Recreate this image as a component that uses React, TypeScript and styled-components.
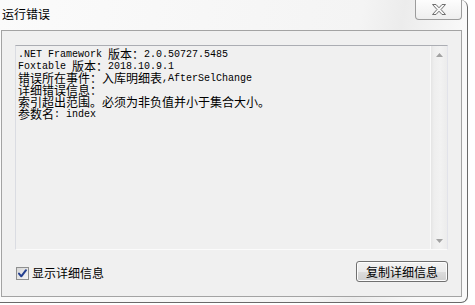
import React from "react";
import styled, { createGlobalStyle } from "styled-components";

const GlobalStyle = createGlobalStyle`
	* {
		box-sizing: border-box;
	}
	body {
		margin: 0;
		background: #ffffff;
		overflow: hidden;
	}
`;

const detailLines = [
	".NET Framework 版本：2.0.50727.5485",
	"Foxtable 版本：2018.10.9.1",
	"错误所在事件：入库明细表,AfterSelChange",
	"详细错误信息：",
	"索引超出范围。必须为非负值并小于集合大小。",
	"参数名: index",
];

const hanRe = /([\u3000-\u9fff\uff00-\uffef]+)/;

const splitRuns = (text: string) =>
	text
		.split(hanRe)
		.filter(Boolean)
		.map((part) => ({ text: part, han: hanRe.test(part) }));

const App = () => {
	return (
		<>
			<GlobalStyle />
			<Window>
				<TitleBar>
					<Title>运行错误</Title>
					<CloseButton aria-label="close">
						<svg width="14" height="11" viewBox="0 0 14 11">
							<polygon
								points="0.5,0.5 4,0.5 7,3.8 10,0.5 13.5,0.5 9,5.5 13.5,10.5 10,10.5 7,7.2 4,10.5 0.5,10.5 5,5.5"
								fill="#f7f7f7"
								stroke="#6f6f6f"
								strokeWidth="1"
								strokeLinejoin="round"
							/>
						</svg>
					</CloseButton>
				</TitleBar>
				<Client>
					<DetailBox>
						<DetailText>
							{detailLines.map((line, i) => (
								<Line key={`line-${i}`}>
									{splitRuns(line).map((run, j) =>
										run.han ? (
											<Han key={j}>{run.text}</Han>
										) : (
											<Mono key={j}>{run.text}</Mono>
										)
									)}
								</Line>
							))}
						</DetailText>
						<ScrollBar>
							<ArrowBox>
								<svg width="7" height="4" viewBox="0 0 7 4">
									<polygon points="3.5,0 7,4 0,4" fill="#a2a2a2" />
								</svg>
							</ArrowBox>
							<ArrowBox>
								<svg width="7" height="4" viewBox="0 0 7 4">
									<polygon points="0,0 7,0 3.5,4" fill="#a2a2a2" />
								</svg>
							</ArrowBox>
						</ScrollBar>
					</DetailBox>
					<Footer>
						<CheckLabel>
							<CheckBox>
								<svg width="11" height="11" viewBox="0 0 11 11">
									<path
										d="M2 5.6 L4.3 8.3 L9 2.2"
										fill="none"
										stroke="#233f8f"
										strokeWidth="2"
										strokeLinecap="round"
										strokeLinejoin="round"
									/>
								</svg>
							</CheckBox>
							<span>显示详细信息</span>
						</CheckLabel>
						<PushButton>复制详细信息</PushButton>
					</Footer>
				</Client>
			</Window>
		</>
	);
};

export default App;

const Window = styled.div`
	display: flex;
	flex-direction: column;
	width: 468px;
	height: 303px;
	border-right: 1px solid #6a6a6a;
	border-bottom: 1px solid #6a6a6a;
	border-radius: 0 7px 7px 0;
	background: linear-gradient(100deg, #fbfbfb 0%, #f4f4f4 70%, #ececec 78%, #f9f9f9 90%);
`;

const TitleBar = styled.div`
	display: flex;
	align-items: flex-start;
	justify-content: space-between;
	height: 30px;
`;

const Title = styled.div`
	padding: 6px 0 0 2px;
	font-family: "Noto Sans CJK SC", sans-serif;
	font-size: 12px;
	line-height: 16px;
	color: #000;
`;

const CloseButton = styled.div`
	display: flex;
	align-items: center;
	justify-content: center;
	width: 47px;
	height: 20px;
	margin-right: 5px;
	border: 1px solid #9c9c9c;
	border-top: none;
	border-radius: 0 0 4px 4px;
	background: linear-gradient(#fdfdfd, #eeeeee);
`;

const Client = styled.div`
	display: flex;
	flex-direction: column;
	gap: 11px;
	width: 461px;
	height: 267px;
	margin-left: 1px;
	padding: 14px 13px;
	border: 1px solid #a3a3a3;
	background: #f0f0f0;
`;

const DetailBox = styled.div`
	display: flex;
	height: 205px;
	border: 1px solid;
	border-color: #abadb3 #e2e3ea #fbfbfb #dadce2;
	background: #f0f0f0;
`;

const DetailText = styled.div`
	flex: 1;
	padding: 2px 2px;
`;

const Line = styled.div`
	display: flex;
	align-items: center;
	height: 12px;
	line-height: 12px;
	white-space: pre;
	color: #000;
`;

const Mono = styled.span`
	display: block;
	height: 12px;
	padding-top: 1px;
	font-family: "Liberation Mono", monospace;
	font-size: 10px;
	line-height: 12px;
`;

const Han = styled.span`
	display: block;
	height: 12px;
	font-family: "Noto Sans CJK SC", sans-serif;
	font-size: 12px;
	line-height: 12px;
	overflow: visible;
`;

const ScrollBar = styled.div`
	display: flex;
	flex-direction: column;
	justify-content: space-between;
	width: 17px;
	border-left: 1px solid #fafafa;
	background: linear-gradient(to right, #e4e4e4 0, #eeeeee 3px, #f2f2f2 60%, #ececec 100%);
`;

const ArrowBox = styled.div`
	display: flex;
	align-items: center;
	justify-content: center;
	height: 17px;
`;

const Footer = styled.div`
	display: flex;
	align-items: flex-start;
	justify-content: space-between;
	height: 21px;
`;

const CheckLabel = styled.label`
	display: flex;
	align-items: center;
	gap: 3px;
	margin: 5px 0 0 1px;
	font-family: "Noto Sans CJK SC", sans-serif;
	font-size: 12px;
	line-height: 14px;
	color: #000;
`;

const CheckBox = styled.span`
	display: flex;
	align-items: center;
	justify-content: center;
	width: 13px;
	height: 13px;
	border: 1px solid #8e8f8f;
	background: linear-gradient(135deg, #d6d6d6, #f6f6f6);
`;

const PushButton = styled.div`
	display: flex;
	align-items: center;
	justify-content: center;
	width: 92px;
	height: 21px;
	border: 1px solid #707070;
	border-radius: 3px;
	background: linear-gradient(#f2f2f2 0%, #ebebeb 50%, #dddddd 51%, #cfcfcf 100%);
	box-shadow: inset 0 0 0 1px #fcfcfc;
	font-family: "Noto Sans CJK SC", sans-serif;
	font-size: 12px;
	color: #000;
`;
